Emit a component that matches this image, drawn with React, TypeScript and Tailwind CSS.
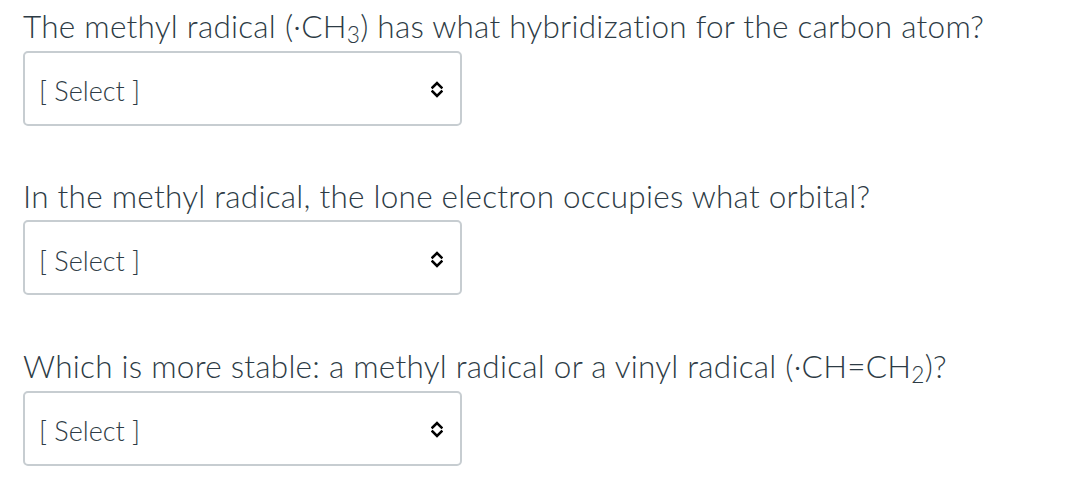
const Sub = ({ children }: { children: string }) => (
  <span className="text-[0.72em] align-[-0.22em] leading-none">{children}</span>
);

const questions = [
  { id: 1, text: <>The methyl radical (·CH<Sub>3</Sub>) has what hybridization for the carbon atom?</> },
  { id: 2, text: <>In the methyl radical, the lone electron occupies what orbital?</> },
  { id: 3, text: <>Which is more stable: a methyl radical or a vinyl radical (·CH=CH<Sub>2</Sub>)?</> },
];

function UpDownIcon() {
  return (
    <svg width="12" height="17" viewBox="0 0 12 17" fill="none" stroke="#000" strokeWidth="2.6" strokeLinecap="square" className="mt-[3px]">
      <path d="M1.5 6.5 L6 2 L10.5 6.5" />
      <path d="M1.5 10.5 L6 15 L10.5 10.5" />
    </svg>
  );
}

function SelectBox() {
  return (
    <div className="w-[439px] h-[75px] border-2 border-[#c7cdd1] rounded-[5px] bg-white flex items-center justify-between pl-[14px] pr-[17px]">
      <span className="text-[27px] font-light text-[#2d3b45] leading-none mt-[5px]">[ Select ]</span>
      <UpDownIcon />
    </div>
  );
}

export default function App() {
  return (
    <div className="w-[1067px] h-[503px] bg-white px-[23px] pt-[6px]" style={{ fontFamily: "Lato, 'Noto Sans', sans-serif" }}>
      {questions.map((q) => (
        <div key={q.id} className="h-[170px]">
          <p className="text-[31.5px] font-light tracking-[0.25px] text-[#2d3b45] leading-[40px] mb-[4px] whitespace-nowrap">{q.text}</p>
          <SelectBox />
        </div>
      ))}
    </div>
  );
}
